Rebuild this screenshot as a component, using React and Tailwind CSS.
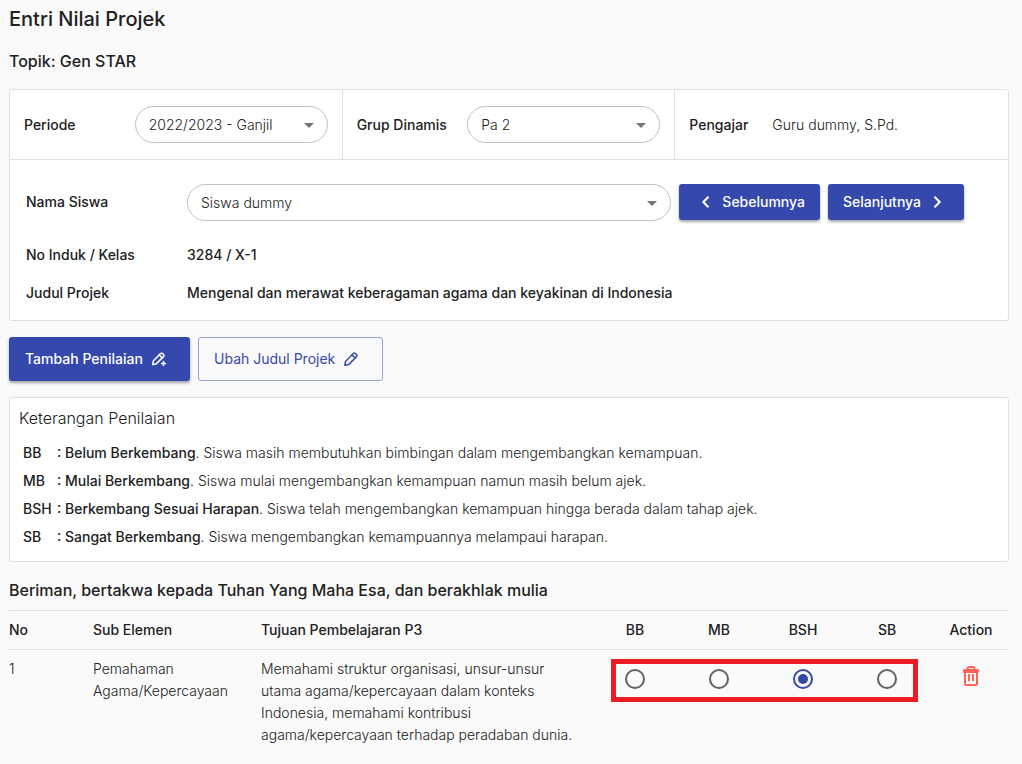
import React, { useState } from "react";

const levels = [
  { code: "BB", name: "Belum Berkembang", text: "Siswa masih membutuhkan bimbingan dalam mengembangkan kemampuan." },
  { code: "MB", name: "Mulai Berkembang", text: "Siswa mulai mengembangkan kemampuan namun masih belum ajek." },
  { code: "BSH", name: "Berkembang Sesuai Harapan", text: "Siswa telah mengembangkan kemampuan hingga berada dalam tahap ajek." },
  { code: "SB", name: "Sangat Berkembang", text: "Siswa mengembangkan kemampuannya melampaui harapan." },
];

const goals = [
  {
    id: 1,
    sub: "Pemahaman Agama/Kepercayaan",
    goal: "Memahami struktur organisasi, unsur-unsur utama agama/kepercayaan dalam konteks Indonesia, memahami kontribusi agama/kepercayaan terhadap peradaban dunia.",
  },
];

function PillSelect({ id, options, className }) {
  return (
    <div className={`relative ${className}`}>
      <select
        id={id}
        className="h-[37px] w-full appearance-none rounded-full border border-[#c0c0c0] bg-white pr-8 pl-[13px] text-sm outline-none"
      >
        {options.map((item) => (
          <option key={item}>{item}</option>
        ))}
      </select>
      <svg
        viewBox="0 0 10 5"
        className="pointer-events-none absolute top-[17px] right-[14px] h-[5px] w-[10px] fill-[#757575]"
      >
        <path d="M0 0h10L5 5z" />
      </svg>
    </div>
  );
}

function Chevron({ d }) {
  return (
    <svg viewBox="0 0 24 24" className="h-6 w-6 fill-none stroke-current stroke-2">
      <path d={d} />
    </svg>
  );
}

function Pencil({ plus }) {
  return (
    <svg
      viewBox="0 0 16 16"
      className="h-4 w-4 fill-none stroke-current stroke-[1.5]"
      strokeLinejoin="round"
      strokeLinecap="round"
    >
      {plus ? (
        <>
          <path d="M1.700 13.500l.6-3.400 7.200-7.500a1.400 1.400 0 0 1 2 0l1 1a1.400 1.400 0 0 1 0 2l-7.300 7.300z" />
          <path d="M8.300 4l2.900 2.900M12.500 10.500v4M10.500 12.500h4" />
        </>
      ) : (
        <>
          <path d="M1.800 14.200l.7-3.700 7.800-8a1.500 1.500 0 0 1 2.100 0l1.100 1.100a1.500 1.500 0 0 1 0 2.100l-7.900 7.900z" />
          <path d="M9 3.900l3.100 3.100" />
        </>
      )}
    </svg>
  );
}

function Trash() {
  return (
    <svg
      viewBox="0 0 18 20"
      className="h-5 w-[18px] fill-none stroke-current stroke-2"
      strokeLinejoin="round"
    >
      <path d="M2 4h14v2H2zM5.500 4V3a2 2 0 0 1 2-2h3a2 2 0 0 1 2 2v1M3 6v12a1 1 0 0 0 1 1h10a1 1 0 0 0 1-1V6M7 8v7M11 8v7" />
    </svg>
  );
}

const primaryButton =
  "flex cursor-pointer items-center rounded-[3px] bg-[#3548ac] text-sm font-medium text-white shadow-[0_2px_3px_rgba(0,0,0,0.35)]";

function App() {
  const [scores, setScores] = useState({ 1: "BSH" });

  return (
    <div className="min-h-screen bg-[#fafafa] pt-[6px] pr-[13px] pl-[9px] font-['Inter',sans-serif] text-sm leading-[22px] font-light text-[#212121]">
      <h1 className="text-xl leading-[26px] font-medium">Entri Nilai Projek</h1>
      <h2 className="mt-[18px] text-base leading-[22px] font-medium">Topik: Gen STAR</h2>

      <section className="mt-[17px] rounded-[3px] border border-[#e0e0e0] bg-white">
        <div className="grid grid-cols-3 border-b border-[#e0e0e0]">
          <div className="flex items-center border-r border-[#e0e0ec] px-[14px] py-4">
            <label htmlFor="periode" className="flex-1 font-medium">Periode</label>
            <PillSelect id="periode" options={["2022/2023 - Ganjil"]} className="w-[193px]" />
          </div>
          <div className="flex items-center border-r border-[#e0e0ec] px-[14px] py-4">
            <label htmlFor="grup" className="flex-1 font-medium">Grup Dinamis</label>
            <PillSelect id="grup" options={["Pa 2"]} className="w-[193px]" />
          </div>
          <div className="flex items-center px-[14px] py-4">
            <span className="w-[83px] font-medium">Pengajar</span>
            <span>Guru dummy, S.Pd.</span>
          </div>
        </div>

        <div className="px-4 pt-6 pb-4 font-medium">
          <div className="flex items-start">
            <label htmlFor="siswa" className="w-[161px] leading-9">Nama Siswa</label>
            <PillSelect id="siswa" options={["Siswa dummy"]} className="flex-1 font-light" />
            <div className="mr-7 ml-2 flex gap-2">
              <button className={`h-9 gap-1 px-[15px] ${primaryButton}`}>
                <Chevron d="M14.500 6.800 9.300 12l5.200 5.200" />
                Sebelumnya
              </button>
              <button className={`h-9 gap-1 px-[15px] ${primaryButton}`}>
                Selanjutnya
                <Chevron d="M9.500 6.800l5.200 5.200-5.200 5.200" />
              </button>
            </div>
          </div>
          <div className="mt-[23px] flex">
            <span className="w-[161px]">No Induk / Kelas</span>
            <span>3284 / X-1</span>
          </div>
          <div className="mt-4 flex">
            <span className="w-[161px]">Judul Projek</span>
            <span>Mengenal dan merawat keberagaman agama dan keyakinan di Indonesia</span>
          </div>
        </div>
      </section>

      <div className="mt-4 flex gap-2">
        <button className={`h-11 w-[181px] gap-2 px-4 ${primaryButton}`}>
          Tambah Penilaian <Pencil plus />
        </button>
        <button className="flex h-11 w-[185px] cursor-pointer items-center gap-2 rounded-[3px] border border-[#9aa3d5] px-[15px] text-sm font-normal text-[#3548ac]">
          Ubah Judul Projek <Pencil />
        </button>
      </div>

      <section className="mt-4 rounded-[3px] border border-[#e0e0e0] bg-white px-[9px] pt-2 pb-[13px]">
        <h3 className="text-base leading-[24px]">Keterangan Penilaian</h3>
        <ul className="mt-3 grid gap-[6px] px-1">
          {levels.map((item) => (
            <li key={item.code} className="flex">
              <span className="w-[34px] font-medium">{item.code}</span>
              <span>
                <span className="font-medium">: {item.name}</span>. {item.text}
              </span>
            </li>
          ))}
        </ul>
      </section>

      <h3 className="mt-[17px] text-base leading-[22px] font-medium">
        Beriman, bertakwa kepada Tuhan Yang Maha Esa, dan berakhlak mulia
      </h3>
      <div className="relative mt-[9px]">
        <table className="w-full table-fixed border-t border-[#e0e0e0] text-left">
          <thead>
            <tr className="h-[39px] border-b border-[#e0e0e0]">
              <th className="w-[84px] font-medium">No</th>
              <th className="w-[168px] font-medium">Sub Elemen</th>
              <th className="font-medium">Tujuan Pembelajaran P3</th>
              {levels.map((item) => (
                <th key={item.code} className="w-[84px] text-center font-medium">{item.code}</th>
              ))}
              <th className="w-20 pl-1 text-center font-medium">Action</th>
            </tr>
          </thead>
          <tbody>
            {goals.map((row) => (
              <tr key={row.id} className="align-top">
                <td className="pt-2">{row.id}</td>
                <td className="pt-2 pr-4">{row.sub}</td>
                <td className="pt-2 pr-4">{row.goal}</td>
                {levels.map((item) => (
                  <td key={item.code} className="pt-[19px]">
                    <input
                      type="radio"
                      name={`score-${row.id}`}
                      aria-label={item.name}
                      checked={scores[row.id] === item.code}
                      onChange={() => setScores((prev) => ({ ...prev, [row.id]: item.code }))}
                      className="mx-auto block h-5 w-5 cursor-pointer appearance-none rounded-full border-2 border-[#616161] bg-clip-content p-[3px] checked:border-[#3548ac] checked:bg-[#3548ac]"
                    />
                  </td>
                ))}
                <td className="pt-4 pl-1">
                  <button aria-label="Hapus" className="mx-auto block cursor-pointer text-[#ff6358]">
                    <Trash />
                  </button>
                </td>
              </tr>
            ))}
          </tbody>
        </table>
        <div className="pointer-events-none absolute top-[49px] right-[91px] h-[43px] w-[307px] border-5 border-[#ed1c24]" />
      </div>
    </div>
  );
}

export default App;
